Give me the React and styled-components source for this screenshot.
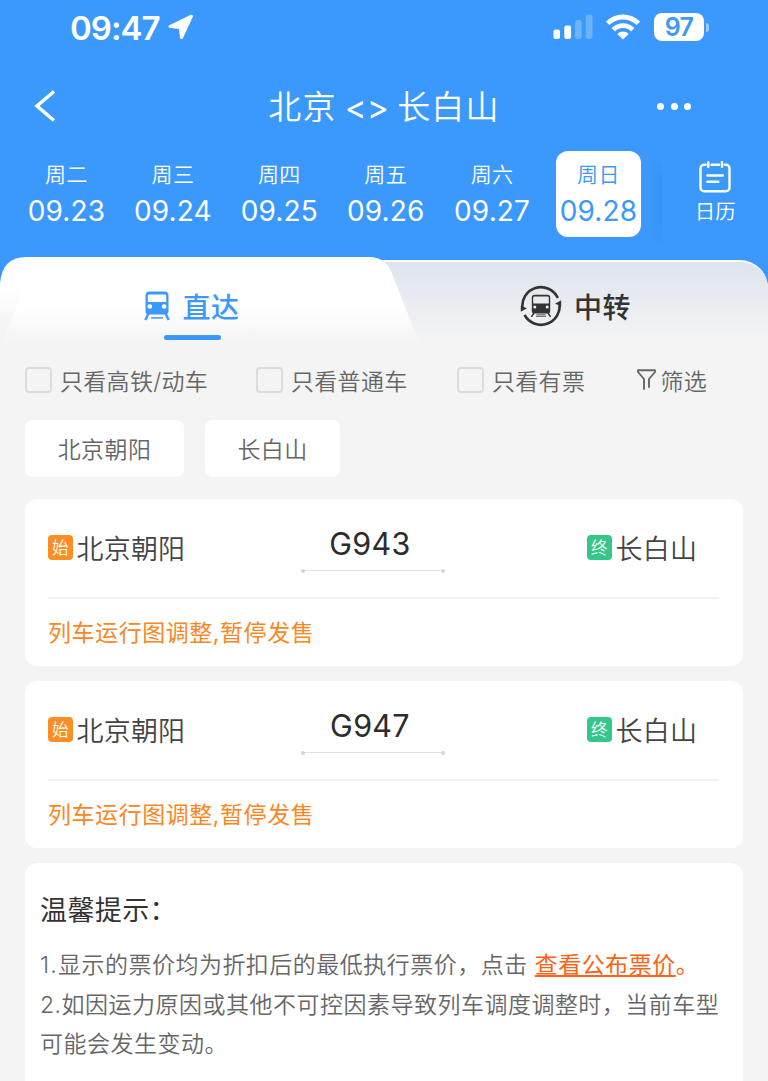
import styled, { createGlobalStyle } from "styled-components";

const GlobalStyle = createGlobalStyle`
  *,
  *::before,
  *::after {
    box-sizing: border-box;
  }
  body {
    margin: 0;
    background: #f4f4f4;
    font-family: Inter, "Noto Sans CJK SC", sans-serif;
    color: #333;
  }
`;

const Page = styled.div`
  width: 768px;
  height: 1081px;
  overflow: hidden;
  background: #f4f4f4;
`;

const Header = styled.header`
  height: 284px;
  background: #3b98fc;
  color: #fff;
`;

const StatusBar = styled.div`
  display: flex;
  align-items: center;
  height: 56px;
  padding: 0 59px 2px 70px;
`;

const Clock = styled.span`
  width: 98px;
  padding-top: 2px;
  font-size: 33px;
  font-weight: 600;
  letter-spacing: -1px;
  white-space: nowrap;
`;

const StatusIcons = styled.div`
  display: flex;
  align-items: center;
  margin-left: auto;
`;

const Battery = styled.span`
  width: 50px;
  height: 28px;
  margin-left: 14px;
  border-radius: 8px;
  background: #fff;
  color: #3b98fc;
  font-size: 25px;
  font-weight: 600;
  line-height: 28px;
  letter-spacing: -0.8px;
  text-align: center;
`;

const BatteryCap = styled.span`
  width: 3px;
  height: 9px;
  margin-left: 2px;
  border-radius: 0 4px 4px 0;
  background: rgba(255, 255, 255, 0.5);
`;

const NavBar = styled.div`
  display: grid;
  grid-template-columns: 100px 1fr 100px;
  align-items: center;
  height: 95px;
  padding: 5px 0 0;
`;

const BackButton = styled.div`
  display: flex;
  padding-left: 33px;
`;

const Title = styled.h1`
  display: flex;
  justify-content: center;
  gap: 8px;
  margin: 0;
  padding-top: 2px;
  font-size: 33px;
  font-weight: 350;
  line-height: 44px;
  letter-spacing: 1.2px;
  white-space: nowrap;
`;

const Arrows = styled.span`
  font-weight: 400;
  letter-spacing: 0.4px;
`;

const More = styled.div`
  display: flex;
  gap: 6.3px;
  justify-content: flex-end;
  padding-right: 77px;
  i {
    flex: none;
    width: 7px;
    height: 7px;
    border-radius: 50%;
    background: #fff;
  }
`;

const DateRow = styled.div`
  display: flex;
  height: 86px;
  padding-left: 24px;
`;

const DateItem = styled.div`
  flex: none;
  display: flex;
  flex-direction: column;
  align-items: center;
  width: 85px;
  margin-right: 21.4px;
  padding-top: 11px;
  border-radius: 12px;
  background: ${({ $active }) => ($active ? "#fff" : "none")};
  color: ${({ $active }) => ($active ? "#3b98fc" : "#fff")};
`;

const Weekday = styled.span`
  font-size: 21px;
  font-weight: 350;
  line-height: 26px;
  letter-spacing: 0.4px;
`;

const Day = styled.span`
  margin-top: 6px;
  font-size: 28px;
  line-height: 34px;
  letter-spacing: 0.15px;
`;

const Calendar = styled.div`
  position: relative;
  flex: 1;
  display: flex;
  flex-direction: column;
  align-items: center;
  padding-top: 10px;
  &::before {
    content: "";
    position: absolute;
    left: -11px;
    top: 6px;
    width: 11px;
    height: 88px;
    background: linear-gradient(to right, transparent, rgba(35, 110, 220, 0.16));
    mask-image: linear-gradient(transparent, #000 25%, #000 75%, transparent);
  }
  span {
    margin-top: 6px;
    font-size: 20.5px;
    font-weight: 350;
    line-height: 26px;
  }
`;

const Tabs = styled.div`
  position: relative;
  display: grid;
  grid-template-columns: 384px 384px;
  height: 93px;
  margin-top: -27px;
`;

/* grey strip behind both tabs */
const TabsBack = styled.div`
  position: absolute;
  inset: 3px 0 0;
  border-top: 2px solid #fafcff;
  border-radius: 28px 28px 0 0;
  background: linear-gradient(#dde4ee, #f4f4f4 88%);
`;

/* white sheet with the slanted right edge */
const TabSheet = styled.div`
  position: absolute;
  inset: 0 auto 0 0;
  width: 430px;
  background: linear-gradient(#fff 50%, #f4f4f4 95%);
  clip-path: path("M0 93 V27 Q2 0 26 0 H370 Q384 0 391 14 L422 93 Z");
  &::before {
    content: "";
    position: absolute;
    inset: 30px auto 0 0;
    width: 24px;
    background: linear-gradient(rgba(243, 244, 247, 0), #f3f4f6 75%);
    clip-path: polygon(0 0, 100% 0, 0 100%);
  }
`;

const Tab = styled.div`
  position: relative;
  display: flex;
  align-items: center;
  height: 98px;
  padding-left: ${({ $left }) => $left}px;
  color: ${({ $active }) => ($active ? "#3b98fc" : "#333")};
  font-size: 28px;
  font-weight: 500;
  letter-spacing: 0.4px;
  svg {
    margin-right: ${({ $gap }) => $gap}px;
  }
`;

const Underline = styled.i`
  position: absolute;
  left: 163.5px;
  top: 77.5px;
  width: 57.5px;
  height: 5px;
  border-radius: 3px;
  background: #3b98fc;
`;

const Filters = styled.div`
  display: flex;
  align-items: center;
  height: 60px;
  padding-left: 25px;
  color: #666;
`;

const Check = styled.label`
  display: flex;
  align-items: center;
  width: ${({ $width }) => $width}px;
  font-size: 23px;
  font-weight: 350;
  letter-spacing: 0.3px;
  white-space: nowrap;
  &::before {
    content: "";
    width: 27px;
    height: 26px;
    margin-right: 8px;
    border: 2px solid #dcdcdc;
    border-radius: 4px;
  }
`;

const FilterButton = styled.div`
  display: flex;
  align-items: center;
  gap: 4.5px;
  font-size: 23px;
  font-weight: 350;
  letter-spacing: 0.3px;
`;

const Chips = styled.div`
  display: flex;
  gap: 21px;
  padding: 10px 25px 22px;
`;

const Chip = styled.div`
  width: ${({ $width }) => $width}px;
  height: 57px;
  border-radius: 8px;
  background: #fff;
  color: #666;
  font-size: 23px;
  font-weight: 350;
  line-height: 60px;
  letter-spacing: 0.4px;
  text-align: center;
`;

const Card = styled.section`
  height: 167px;
  margin: 0 25px 15px;
  padding: 0 24px 0 23px;
  border-radius: 12px;
  background: #fff;
`;

const Route = styled.div`
  display: grid;
  grid-template-columns: 253px 144px 1fr;
  height: 100px;
  border-bottom: 2px solid #f3f2f2;
`;

const Station = styled.div`
  display: flex;
  align-items: center;
  gap: 4px;
  padding-left: ${({ $left }) => $left || 0}px;
  height: 96px;
  color: #444;
  font-size: 27px;
  font-weight: 350;
  letter-spacing: 0.2px;
`;

const Badge = styled.span`
  width: 24.5px;
  height: 25px;
  border-radius: 4px;
  background: ${({ $color }) => $color};
  color: #fff;
  font-size: 16.5px;
  line-height: 26px;
  letter-spacing: 0;
  text-align: center;
`;

const TrainNo = styled.div`
  align-self: start;
  position: relative;
  height: 72px;
  padding: 26px 0 0;
  border-bottom: 1.5px solid #e2e2e2;
  color: #2c2c2c;
  font-size: 30.5px;
  font-weight: 400;
  line-height: 38px;
  letter-spacing: 0.3px;
  text-align: center;
  text-indent: -6px;
  &::before,
  &::after {
    content: "";
    position: absolute;
    bottom: -3px;
    width: 4px;
    height: 4px;
    border-radius: 50%;
    background: #d6d6d6;
  }
  &::before {
    left: 0;
  }
  &::after {
    right: 0;
  }
`;

const Notice = styled.p`
  margin: 0;
  color: #fb8724;
  font-size: 23px;
  line-height: 69px;
  letter-spacing: 0.55px;
`;

const Tips = styled.section`
  height: 218px;
  margin: 0 25px;
  padding: 28px 0 0 15px;
  border-radius: 12px 12px 0 0;
  background: #fff;
  h2 {
    margin: 0 0 15px;
    color: #333;
    font-size: 27px;
    font-weight: 400;
    line-height: 40px;
    letter-spacing: 0.4px;
  }
  p {
    margin: 0;
    color: #666;
    font-size: 23px;
    font-weight: 350;
    line-height: 39.5px;
    letter-spacing: 0.49px;
    white-space: nowrap;
  }
`;

const Num = styled.span`
  letter-spacing: 1.2px;
`;

const FareLink = styled.span`
  color: #fb6416;
  font-weight: 400;
  u {
    text-decoration-thickness: 2px;
    text-underline-offset: 2px;
    text-decoration-skip-ink: none;
  }
`;

const LocationIcon = () => (
  <svg width="26" height="26" viewBox="0 0 26 26">
    <path d="M23.500 2.200 13.500 23.500 12.300 13.600 2 12.500z" fill="#fff" stroke="#fff" strokeWidth="3" strokeLinejoin="round" />
  </svg>
);

const SignalIcon = () => (
  <svg width="40" height="26" viewBox="0 0 40 26">
    <g fill="#fff">
      <rect x="0.5" y="15.5" width="6.5" height="9.5" rx="2" />
      <rect x="11.3" y="11.5" width="6.7" height="13.5" rx="2" />
      <rect x="22" y="6" width="6.7" height="19" rx="2" opacity="0.25" />
      <rect x="32.8" y="0.5" width="6.7" height="24.5" rx="2" opacity="0.25" />
    </g>
  </svg>
);

const WifiIcon = styled(({ className }) => (
  <svg className={className} width="34" height="26" viewBox="0 0 34 26">
    <g fill="none" stroke="#fff" strokeWidth="4.8">
      <path d="M1.600 9.300a22 22 0 0 1 30.800 0" />
      <path d="M7.300 15.700a13.800 13.800 0 0 1 19.400 0" />
    </g>
    <path d="M11.300 20a8 8 0 0 1 11.400 0L17 25.600z" fill="#fff" />
  </svg>
))`
  margin-left: 13px;
`;

const CalendarIcon = () => (
  <svg width="32" height="32" viewBox="0 0 32 32" fill="none" stroke="#fff" strokeWidth="2.4" strokeLinecap="round">
    <path d="M6.500 3.800H5a3.500 3.500 0 0 0-3.500 3.500v19.500A3.500 3.500 0 0 0 5 30.300h22a3.500 3.500 0 0 0 3.500-3.500V7.300A3.500 3.500 0 0 0 27 3.800h-1M12.500 3.800h7.500" />
    <path d="M9.300 1.300v4.500M23 1.300v4.500M8.300 14.500h15.500M8.300 20.800h11" />
  </svg>
);

const TrainIcon = () => (
  <svg width="26" height="30" viewBox="0 0 26 30">
    <path
      fillRule="evenodd"
      d="M5.500.5h15q4 0 4 4V20q0 3.500-3.500 3.500H5Q1.500 23.500 1.500 20V4.500q0-4 4-4zM5 3.600q-1.200 0-1.200 1.200V11h18.400V4.800Q22.200 3.600 21 3.600z"
      fill="#3b98fc"
    />
    <circle cx="5.8" cy="15.5" r="2.3" fill="#fff" />
    <circle cx="20.2" cy="15.5" r="2.3" fill="#fff" />
    <path d="M4.500 22.500 1.300 29M21.500 22.500l3.200 6.500" stroke="#3b98fc" strokeWidth="2.4" />
    <path d="M7 26.900h12" stroke="#3b98fc" strokeWidth="1.5" />
  </svg>
);

const TransferIcon = () => (
  <svg width="42" height="42" viewBox="0 0 42 42">
    <g fill="none" stroke="#333" strokeWidth="2.7">
      <path d="M2.600 24A18.600 18.600 0 0 1 37.800 13" />
      <path d="M39.400 18A18.600 18.600 0 0 1 4.600 29.800" />
    </g>
    <path d="M.8 21v5.800l6.200-3.600zM41.200 21v-5.800L35 18.800z" fill="#333" />
    <path
      fillRule="evenodd"
      d="M14.500 9.800h13q2.700 0 2.700 2.700V26q0 2.500-2.500 2.500H14.300q-2.500 0-2.500-2.500V12.500q0-2.700 2.700-2.700zM14.200 11.500q-1 0-1 1v6h15.600v-6q0-1-1-1z"
      fill="#333"
    />
    <circle cx="14.8" cy="22" r="1.5" fill="#f0f2f5" />
    <circle cx="27.2" cy="22" r="1.5" fill="#f0f2f5" />
    <path d="m14 28-2.600 3.800M28 28l2.600 3.800" stroke="#333" strokeWidth="1.5" />
    <path d="M16.500 29.800h9M16 31.300h10" stroke="#333" strokeWidth="0.8" />
  </svg>
);

const FunnelIcon = () => (
  <svg width="19" height="22" viewBox="0 0 19 22" fill="none" stroke="#666" strokeWidth="1.9" strokeLinejoin="round" strokeLinecap="round">
    <path d="M7 20V10L1 3V1.200h17V3l-6 7v8" />
  </svg>
);

const dates = [
  ["周二", "09.23"],
  ["周三", "09.24"],
  ["周四", "09.25"],
  ["周五", "09.26"],
  ["周六", "09.27"],
  ["周日", "09.28"],
];

const trains = ["G943", "G947"];

const TrainCard = ({ no }) => (
  <Card>
    <Route>
      <Station>
        <Badge $color="#fb8f25">始</Badge>
        北京朝阳
      </Station>
      <TrainNo>{no}</TrainNo>
      <Station $left={142}>
        <Badge $color="#35c78a">终</Badge>
        长白山
      </Station>
    </Route>
    <Notice>列车运行图调整,暂停发售</Notice>
  </Card>
);

const App = () => {
  return (
    <Page>
      <GlobalStyle />
      <Header>
        <StatusBar>
          <Clock>09:47</Clock>
          <LocationIcon />
          <StatusIcons>
            <SignalIcon />
            <WifiIcon />
            <Battery>97</Battery>
            <BatteryCap />
          </StatusIcons>
        </StatusBar>

        <NavBar>
          <BackButton>
            <svg width="24" height="32" viewBox="0 0 24 32" fill="none" stroke="#fff" strokeWidth="3.5">
              <path d="M21 1.500 4 16l17 14.500" />
            </svg>
          </BackButton>
          <Title>
            <span>北京</span>
            <Arrows>&lt;&gt;</Arrows>
            <span>长白山</span>
          </Title>
          <More>
            <i />
            <i />
            <i />
          </More>
        </NavBar>

        <DateRow>
          {dates.map(([week, day]) => (
            <DateItem key={day} $active={day === "09.28"}>
              <Weekday>{week}</Weekday>
              <Day>{day}</Day>
            </DateItem>
          ))}
          <Calendar>
            <CalendarIcon />
            <span>日历</span>
          </Calendar>
        </DateRow>
      </Header>

      <Tabs>
        <TabsBack />
        <TabSheet />
        <Tab $active $left={143.5} $gap={13}>
          <TrainIcon />
          直达
          <Underline />
        </Tab>
        <Tab $left={135.5} $gap={12.5}>
          <TransferIcon />
          中转
        </Tab>
      </Tabs>

      <Filters>
        <Check $width={231}>只看高铁/动车</Check>
        <Check $width={201}>只看普通车</Check>
        <Check $width={180}>只看有票</Check>
        <FilterButton>
          <FunnelIcon />
          筛选
        </FilterButton>
      </Filters>

      <Chips>
        <Chip $width={159}>北京朝阳</Chip>
        <Chip $width={135}>长白山</Chip>
      </Chips>

      {trains.map((no) => (
        <TrainCard key={no} no={no} />
      ))}

      <Tips>
        <h2>温馨提示：</h2>
        <p>
          <Num>1.</Num>显示的票价均为折扣后的最低执行票价，点击{" "}
          <FareLink>
            <u>查看公布票价</u>。
          </FareLink>
        </p>
        <p>2.如因运力原因或其他不可控因素导致列车调度调整时，当前车型</p>
        <p>可能会发生变动。</p>
      </Tips>
    </Page>
  );
};

export default App;
